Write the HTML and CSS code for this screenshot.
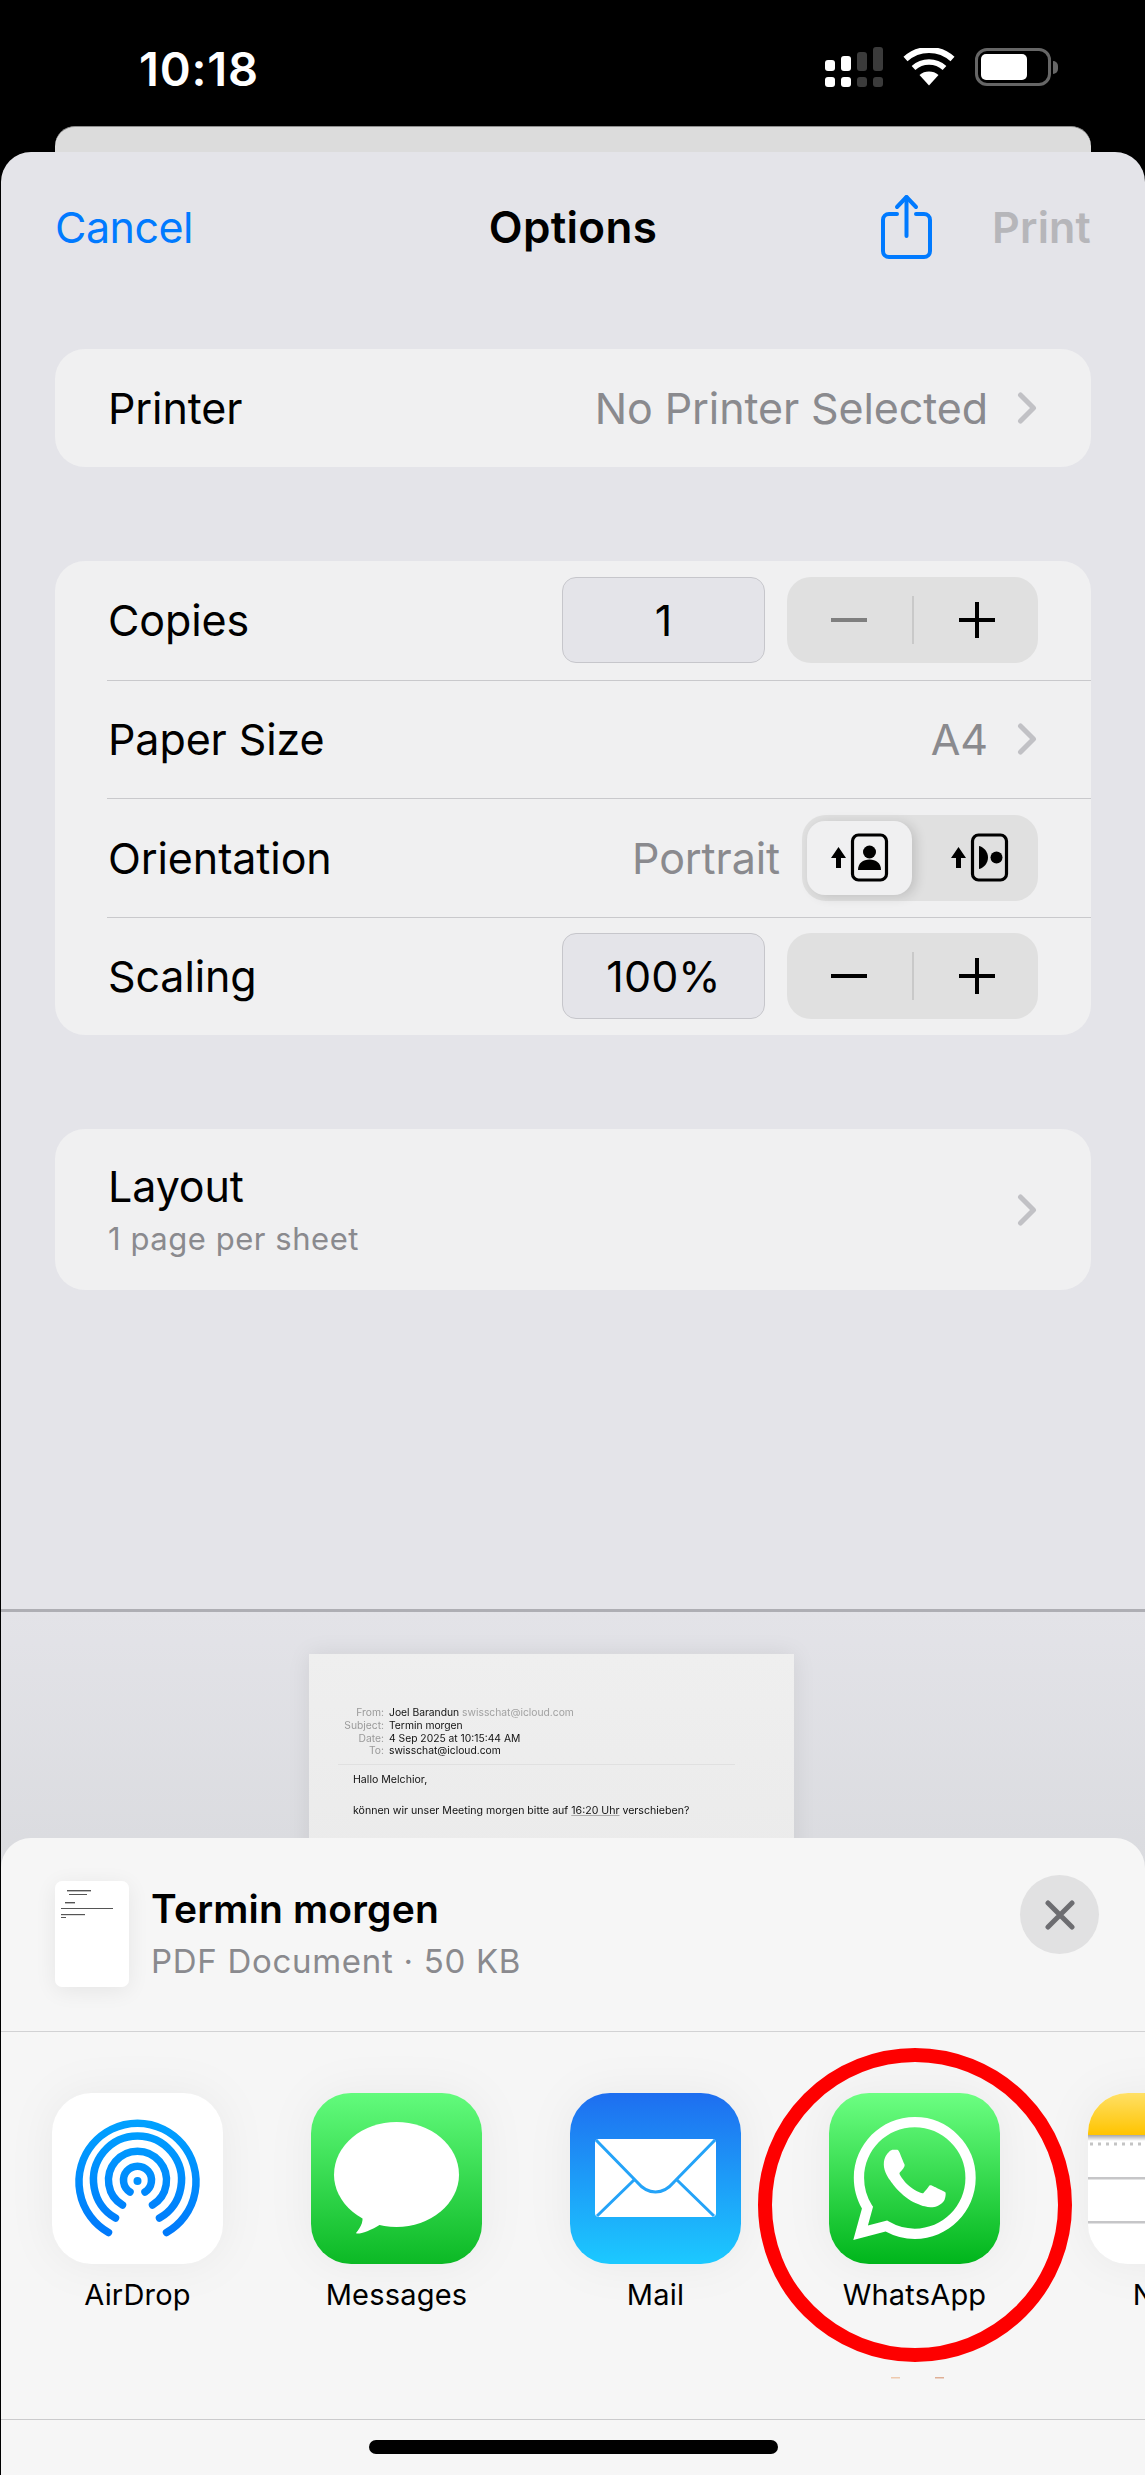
FILE: index.html
```html
<!DOCTYPE html>
<html lang="en">
<head>
<meta charset="utf-8">
<title>Options</title>
<link rel="stylesheet" href="styles.css">
</head>
<body>
<div class="phone">
  <header class="status">
    <div class="time">10:18</div>
    <svg class="signal" width="58" height="41" viewBox="0 0 58 41">
      <g fill="#fff">
        <rect x="0" y="13" width="10" height="11" rx="3"/><rect x="0" y="30" width="10" height="10" rx="3"/>
        <rect x="16" y="9" width="10" height="15" rx="3"/><rect x="16" y="30" width="10" height="10" rx="3"/>
      </g>
      <g fill="#3b3b3b">
        <rect x="32" y="5" width="10" height="19" rx="3"/><rect x="32" y="30" width="10" height="10" rx="3"/>
        <rect x="48" y="0" width="10" height="24" rx="3"/><rect x="48" y="30" width="10" height="10" rx="3"/>
      </g>
    </svg>
    <svg class="wifi" width="52" height="38" viewBox="0 0 52 38">
      <path d="M26 37.5 L16.5 27 A15 15 0 0 1 35.5 27 Z" fill="#fff"/>
      <path d="M10.5 20 A23 23 0 0 1 41.5 20" fill="none" stroke="#fff" stroke-width="5.5"/>
      <path d="M2.5 11 A35 35 0 0 1 49.5 11" fill="none" stroke="#fff" stroke-width="6"/>
    </svg>
    <div class="battery"><div class="battery-fill"></div></div>
    <div class="battery-nub"></div>
  </header>
  <div class="back-sheet"></div>

  <main class="sheet">
    <section class="options">
      <nav class="nav">
        <span class="nav-cancel">Cancel</span>
        <span class="nav-title">Options</span>
        <div class="nav-right">
          <svg class="share-icon" width="54" height="66" viewBox="0 0 54 66" fill="none" stroke="#007aff" stroke-width="4" stroke-linecap="round" stroke-linejoin="round">
            <path d="M17 20 H9 a6 6 0 0 0 -6 6 V57 a6 6 0 0 0 6 6 H44 a6 6 0 0 0 6 -6 V26 a6 6 0 0 0 -6 -6 H36"/>
            <path d="M26.5 3 V42"/>
            <path d="M17 13 L26.5 3 L36 13"/>
          </svg>
          <span class="nav-print">Print</span>
        </div>
      </nav>

      <div class="card card-single">
        <span class="label">Printer</span>
        <span class="value">No Printer Selected</span>
        <svg class="chevron" width="20" height="32" viewBox="0 0 20 32"><path d="M3.5 3 L16.5 16 L3.5 29"/></svg>
      </div>

      <div class="card card-rows">
        <div class="row">
          <span class="label">Copies</span>
          <div class="field">1</div>
          <div class="stepper">
            <svg class="step-btn step-off" width="36" height="36" viewBox="0 0 36 36"><path d="M0 18 H36"/></svg>
            <span class="step-divider"></span>
            <svg class="step-btn" width="36" height="36" viewBox="0 0 36 36"><path d="M0 18 H36 M18 0 V36"/></svg>
          </div>
        </div>
        <div class="row row-line">
          <span class="label">Paper Size</span>
          <span class="value">A4</span>
          <svg class="chevron" width="20" height="32" viewBox="0 0 20 32"><path d="M3.5 3 L16.5 16 L3.5 29"/></svg>
        </div>
        <div class="row row-line">
          <span class="label">Orientation</span>
          <span class="value value-tight">Portrait</span>
          <div class="segmented">
            <div class="seg seg-on">
              <svg width="60" height="50" viewBox="0 0 60 50">
                <path d="M8.5 14 L16 25 H11 V35 H6 V25 H1 Z M8.5 14" class="seg-arrow"/>
                <rect x="22.5" y="2" width="34" height="45" rx="6" class="seg-page"/>
                <circle cx="39.5" cy="19" r="6.5"/>
                <path d="M28 37 C28 30 33 26.5 39.5 26.5 C46 26.5 51 30 51 37 Z"/>
              </svg>
            </div>
            <div class="seg seg-off">
              <svg width="60" height="50" viewBox="0 0 60 50">
                <path d="M8.5 14 L16 25 H11 V35 H6 V25 H1 Z" class="seg-arrow"/>
                <rect x="22.5" y="2" width="34" height="45" rx="6" class="seg-page"/>
                <path d="M29 13 C34 14 38 19 38 24.5 C38 30 34 35 29 36 Z"/>
                <circle cx="46.5" cy="24.5" r="6"/>
              </svg>
            </div>
          </div>
        </div>
        <div class="row row-line">
          <span class="label">Scaling</span>
          <div class="field">100%</div>
          <div class="stepper">
            <svg class="step-btn" width="36" height="36" viewBox="0 0 36 36"><path d="M0 18 H36"/></svg>
            <span class="step-divider"></span>
            <svg class="step-btn" width="36" height="36" viewBox="0 0 36 36"><path d="M0 18 H36 M18 0 V36"/></svg>
          </div>
        </div>
      </div>

      <div class="card card-layout">
        <div class="layout-text">
          <span class="label">Layout</span>
          <span class="sublabel">1 page per sheet</span>
        </div>
        <svg class="chevron" width="20" height="32" viewBox="0 0 20 32"><path d="M3.5 3 L16.5 16 L3.5 29"/></svg>
      </div>
    </section>

    <section class="preview">
      <article class="paper">
        <dl class="mail-head">
          <dt>From:</dt><dd>Joel Barandun <span class="mail-muted">swisschat@icloud.com</span></dd>
          <dt>Subject:</dt><dd>Termin morgen</dd>
          <dt>Date:</dt><dd>4 Sep 2025 at 10:15:44 AM</dd>
          <dt>To:</dt><dd>swisschat@icloud.com</dd>
        </dl>
        <p class="mail-line mail-first">Hallo Melchior,</p>
        <p class="mail-line mail-second">können wir unser Meeting morgen bitte auf <span class="mail-link">16:20 Uhr</span> verschieben?</p>
      </article>
    </section>

    <section class="share">
      <div class="share-head">
        <svg class="thumb" width="74" height="106" viewBox="0 0 74 106">
          <g fill="#555">
            <rect x="12" y="9" width="24" height="1.4"/><rect x="14" y="13" width="18" height="1"/><rect x="10" y="21" width="10" height="1.4"/>
            <rect x="6" y="27" width="52" height="1"/><rect x="6" y="33" width="24" height="1.2"/><rect x="6" y="36" width="5" height="1"/>
          </g>
        </svg>
        <div class="share-title">
          <div class="doc-name">Termin morgen</div>
          <div class="doc-meta">PDF Document · 50 KB</div>
        </div>
        <button class="close" type="button" aria-label="Close">
          <svg width="30" height="30" viewBox="0 0 30 30"><path d="M3 3 L27 27 M27 3 L3 27"/></svg>
        </button>
      </div>

      <div class="apps">
        <div class="app">
          <svg class="app-icon" width="171" height="171" viewBox="0 0 171 171">
            <defs>
              <linearGradient id="air" gradientUnits="userSpaceOnUse" x1="0" y1="25" x2="0" y2="145"><stop offset="0" stop-color="#00a2ff"/><stop offset="1" stop-color="#0078fb"/></linearGradient>
            </defs>
            <rect width="171" height="171" rx="40" fill="#fff"/>
            <g fill="none" stroke="url(#air)" stroke-width="7.5" stroke-linecap="round">
              <path d="M56.5 139.5 A58.5 58.5 0 1 1 114.5 139.5"/>
              <path d="M63.5 125 A44 44 0 1 1 107.5 125"/>
              <path d="M70.5 112 A29 29 0 1 1 100.5 112"/>
              <path d="M78 99 A14 14 0 1 1 93 99"/>
            </g>
            <circle cx="85.5" cy="88" r="4" fill="#0090ff"/>
          </svg>
          <span class="app-name">AirDrop</span>
        </div>
        <div class="app">
          <svg class="app-icon" width="171" height="171" viewBox="0 0 171 171">
            <defs>
              <linearGradient id="msg" x1="0" y1="0" x2="0" y2="1"><stop offset="0" stop-color="#62fb7c"/><stop offset="1" stop-color="#0cb925"/></linearGradient>
            </defs>
            <rect width="171" height="171" rx="40" fill="url(#msg)"/>
            <ellipse cx="85.5" cy="81.5" rx="62.5" ry="52.5" fill="#fff"/>
            <path d="M50 118 C54 127 50 134 45 140 C46 142 58 139 70 131 Z" fill="#fff"/>
          </svg>
          <span class="app-name">Messages</span>
        </div>
        <div class="app">
          <svg class="app-icon" width="171" height="171" viewBox="0 0 171 171">
            <defs>
              <linearGradient id="mail" x1="0" y1="0" x2="0" y2="1"><stop offset="0" stop-color="#1e6ef0"/><stop offset="1" stop-color="#1cc9ff"/></linearGradient>
            </defs>
            <rect width="171" height="171" rx="40" fill="url(#mail)"/>
            <rect x="25" y="46" width="121" height="78" rx="4" fill="#fff"/>
            <path d="M26 47 L67 89 C72 95 78 99 85.5 99 C93 99 99 95 104 89 L145 47 M64 87 L27 123 M107 87 L144 123" fill="none" stroke="#24a3f8" stroke-width="3"/>
          </svg>
          <span class="app-name">Mail</span>
        </div>
        <div class="app">
          <svg class="app-icon" width="171" height="171" viewBox="0 0 171 171">
            <defs>
              <linearGradient id="wa" x1="0" y1="0" x2="0" y2="1"><stop offset="0" stop-color="#6cff82"/><stop offset="1" stop-color="#00b51b"/></linearGradient>
            </defs>
            <rect width="171" height="171" rx="40" fill="url(#wa)"/>
            <g transform="translate(24 24) scale(5.125)">
              <path fill="#fff" d="M17.472 14.382c-.297-.149-1.758-.867-2.03-.967-.273-.099-.471-.148-.67.15-.197.297-.767.966-.94 1.164-.173.199-.347.223-.644.075-.297-.15-1.255-.463-2.39-1.475-.883-.788-1.48-1.761-1.653-2.059-.173-.297-.018-.458.13-.606.134-.133.298-.347.446-.52.149-.174.198-.298.298-.497.099-.198.05-.371-.025-.52-.075-.149-.669-1.612-.916-2.207-.242-.579-.487-.5-.669-.51-.173-.008-.371-.01-.57-.01-.198 0-.52.074-.792.372-.272.297-1.04 1.016-1.04 2.479 0 1.462 1.065 2.875 1.213 3.074.149.198 2.096 3.2 5.077 4.487.709.306 1.262.489 1.694.625.712.227 1.36.195 1.871.118.571-.085 1.758-.719 2.006-1.413.248-.694.248-1.289.173-1.413-.074-.124-.272-.198-.57-.347m-5.421 7.403h-.004a9.87 9.87 0 01-5.031-1.378l-.361-.214-3.741.982.998-3.648-.235-.374a9.86 9.86 0 01-1.51-5.26c.001-5.45 4.436-9.884 9.888-9.884 2.64 0 5.122 1.03 6.988 2.898a9.825 9.825 0 012.893 6.994c-.003 5.45-4.437 9.884-9.885 9.884m8.413-18.297A11.815 11.815 0 0012.05 0C5.495 0 .16 5.335.157 11.892c0 2.096.547 4.142 1.588 5.945L.057 24l6.305-1.654a11.882 11.882 0 005.683 1.448h.005c6.554 0 11.89-5.335 11.893-11.893a11.821 11.821 0 00-3.48-8.413z"/>
            </g>
          </svg>
          <span class="app-name">WhatsApp</span>
        </div>
        <div class="app">
          <svg class="app-icon" width="171" height="171" viewBox="0 0 171 171">
            <defs>
              <linearGradient id="notes" x1="0" y1="0" x2="0" y2="1"><stop offset="0" stop-color="#ffe066"/><stop offset="1" stop-color="#ffc400"/></linearGradient>
              <linearGradient id="notes-sh" x1="0" y1="0" x2="0" y2="1"><stop offset="0" stop-color="#a8a8a8"/><stop offset="1" stop-color="#fff"/></linearGradient>
            </defs>
            <rect width="171" height="171" rx="40" fill="#fff"/>
            <path d="M0 42 V40 A40 40 0 0 1 40 0 H131 A40 40 0 0 1 171 40 V42 Z" fill="url(#notes)"/>
            <rect y="42" width="171" height="6" fill="url(#notes-sh)"/>
            <path d="M2 51 H171" stroke="#c4c4c4" stroke-width="3" stroke-dasharray="3 5"/>
            <rect y="84" width="171" height="2.5" fill="#c6c6c8"/>
            <rect y="128" width="171" height="2.5" fill="#c6c6c8"/>
          </svg>
          <span class="app-name">Notes</span>
        </div>
      </div>

      <footer class="share-foot"><div class="home-bar"></div></footer>
    </section>
  </main>

  <svg class="mark" width="320" height="340" viewBox="0 0 320 340">
    <circle cx="160" cy="160" r="150" fill="none" stroke="#fe0000" stroke-width="14"/>
    <rect x="136" y="332" width="9" height="1.5" fill="#eec9ae"/>
    <rect x="180" y="332" width="9" height="1.5" fill="#dfaf95"/>
  </svg>
</div>
</body>
</html>
```
FILE: styles.css
```css
* { box-sizing: border-box; }
html, body { margin: 0; padding: 0; }
body { background: #000; font-family: Inter, "Noto Sans", "Liberation Sans", sans-serif; color: #000; }

.phone { position: relative; width: 1145px; height: 2475px; overflow: hidden; background: #000; display: flex; flex-direction: column; }

/* status bar */
.status { height: 126px; flex: none; display: flex; align-items: flex-start; color: #fff; }
.time { margin: 42px 0 0 139px; width: 686px; font-size: 47px; line-height: 54px; font-weight: 600; letter-spacing: .8px; }
.signal { margin: 47px 0 0 0; }
.wifi { margin: 48px 0 0 20px; }
.battery { margin: 48px 0 0 20px; width: 76px; height: 38px; border: 3px solid #666; border-radius: 12px; padding: 3px; }
.battery-fill { width: 46px; height: 100%; background: #fff; border-radius: 5px; }
.battery-nub { margin: 61px 0 0 2px; width: 5px; height: 13px; background: #666; border-radius: 0 5px 5px 0; }

.back-sheet { flex: none; height: 26px; margin: 0 54px 0 55px; background: #dcdcdc; border-top: 1px solid #8d8d8d; border-radius: 20px 20px 0 0; }

/* main sheet */
.sheet { flex: 1; margin-left: 1px; background: #e4e4e9; border-radius: 30px 30px 0 0; display: flex; flex-direction: column; overflow: hidden; }
.options { height: 1457px; flex: none; }

.nav { height: 152px; margin-bottom: 45px; padding: 0 54px 0 54px; display: grid; grid-template-columns: 1fr auto 1fr; align-items: center; font-size: 43px; }
.nav-cancel { color: #007aff; letter-spacing: -.5px; margin-top: -2px; }
.nav-title { font-size: 44px; font-weight: 600; letter-spacing: .3px; margin-top: -2px; }
.nav-right { display: flex; justify-content: flex-end; align-items: center; }
.share-icon { margin-top: -2px; margin-right: 58px; }
.nav-print { color: #b6b6ba; font-weight: 600; letter-spacing: .2px; margin-top: -2px; }

.card { margin: 0 54px; background: #f0f0f1; border-radius: 30px; }
.label { font-size: 43px; letter-spacing: -.1px; line-height: 52px; }
.value { font-size: 43px; letter-spacing: -.1px; line-height: 52px; color: #8a8a8e; margin-left: auto; }
.chevron { flex: none; fill: none; stroke: #c1c1c5; stroke-width: 5; stroke-linecap: round; stroke-linejoin: round; }

.card-single { height: 118px; padding: 0 54px 0 53px; display: flex; align-items: center; margin-bottom: 94px; }
.card-single .chevron { margin-left: 29px; }

.card-rows { height: 474px; margin-bottom: 94px; overflow: hidden; }
.row { height: 118.5px; margin-left: 52px; padding: 0 53px 0 1px; display: flex; align-items: center; }
.row-line { border-top: 1.5px solid #c9c9cc; }
.row > .chevron { margin-left: 29px; margin-right: 1px; }
.value-tight { margin-right: 22px; }

.field { margin-left: auto; width: 203px; height: 86px; background: #e4e4e9; border: 1.5px solid #c6c6cb; border-radius: 14px; display: flex; align-items: center; justify-content: center; font-size: 43px; letter-spacing: .1px; }
.stepper { margin-left: 22px; width: 251px; height: 86px; background: #e0e0e0; border-radius: 24px; display: flex; align-items: center; padding: 0 43px 0 44px; }
.step-btn { flex: none; fill: none; stroke: #000; stroke-width: 4; stroke-linecap: round; }
.step-off { stroke: #7f7f7f; }
.step-divider { width: 2px; height: 48px; margin: 0 45px; background: #c9c9c9; flex: none; }

.segmented { width: 236px; height: 86px; background: #e0e0e0; border-radius: 24px; padding: 6px 5px; display: flex; }
.seg { display: flex; align-items: center; justify-content: center; }
.seg-on { width: 105px; background: #f0f0f1; border-radius: 18px; box-shadow: 4px 2px 12px rgba(0,0,0,.14); }
.seg-off { flex: 1; padding-left: 14px; }
.seg-page { fill: none; stroke: #000; stroke-width: 3.2; }
.seg-arrow { stroke: none; }

.card-layout { height: 161px; padding: 0 54px 0 53px; display: flex; align-items: center; justify-content: space-between; }
.layout-text { display: flex; flex-direction: column; }
.layout-text .label { margin-top: -3px; }
.sublabel { margin-top: 9px; font-size: 31px; line-height: 36px; letter-spacing: .55px; color: #8a8a8e; }

/* document preview */
.preview { flex: none; height: 259px; border-top: 3px solid #aeaeb4; background: linear-gradient(#e3e3e8, #dadbdf); overflow: hidden; padding: 42px 0 0 307.5px; }
.paper { width: 485.5px; height: 300px; background: linear-gradient(#efefef, #e9e9e9); box-shadow: 0 0 22px rgba(0,0,0,.08); padding-top: 52px; color: #111; font-size: 10.6px; line-height: 12.8px; filter: blur(.35px); }
.mail-head { margin: 0 59px 0 29.5px; padding-bottom: 7px; display: grid; grid-template-columns: 46px 1fr; column-gap: 5px; border-bottom: 1px solid #e0e0e0; font-size: 10.3px; }
.mail-head dt { text-align: right; color: #9a9a9a; }
.mail-head dd { margin: 0; }
.mail-muted { color: #a2a2a2; }
.mail-line { margin: 0; padding-left: 44.5px; }
.mail-first { margin-top: 9px; }
.mail-second { margin-top: 18px; }
.mail-link { text-decoration: underline; text-decoration-color: #aaa; }

/* share sheet */
.share { position: relative; flex: 1; margin-top: -30px; background: #f6f6f6; border-radius: 30px 30px 0 0; display: flex; flex-direction: column; }
.share-head { height: 194px; flex: none; border-bottom: 1.5px solid #d2d2d4; padding: 43px 46px 0 54px; display: flex; align-items: flex-start; }
.thumb { flex: none; background: #fff; border-radius: 7px; box-shadow: 0 4px 22px rgba(0,0,0,.07); }
.share-title { margin-left: 22px; flex: 1; }
.doc-name { font-size: 39px; line-height: 46px; font-weight: 600; letter-spacing: .2px; margin-top: 5px; }
.doc-meta { font-size: 33px; line-height: 40px; color: #8a8a8e; letter-spacing: .7px; margin-top: 9px; }
.close { flex: none; width: 79px; height: 79px; margin-top: -6px; border: 0; padding: 0; border-radius: 50%; background: #e1e1e2; display: flex; align-items: center; justify-content: center; }
.close svg { fill: none; stroke: #6d6d71; stroke-width: 5; stroke-linecap: round; }

.apps { flex: 1; padding: 61px 0 0 51px; border-bottom: 1.5px solid #cbcbcd; display: flex; gap: 88px; overflow: hidden; }
.app { flex: none; width: 171px; display: flex; flex-direction: column; align-items: center; }
.app-icon { flex: none; overflow: visible; filter: drop-shadow(0 0 22px rgba(0,0,0,.05)); }
.app-name { margin-top: 13px; font-size: 29px; line-height: 36px; letter-spacing: .2px; white-space: nowrap; }

.share-foot { height: 55px; flex: none; padding: 20px 0 0 368px; }
.home-bar { width: 409px; height: 14px; background: #000; border-radius: 7px; }

/* hand-drawn annotation over the screenshot */
.mark { position: absolute; left: 755px; top: 2045px; }
```
